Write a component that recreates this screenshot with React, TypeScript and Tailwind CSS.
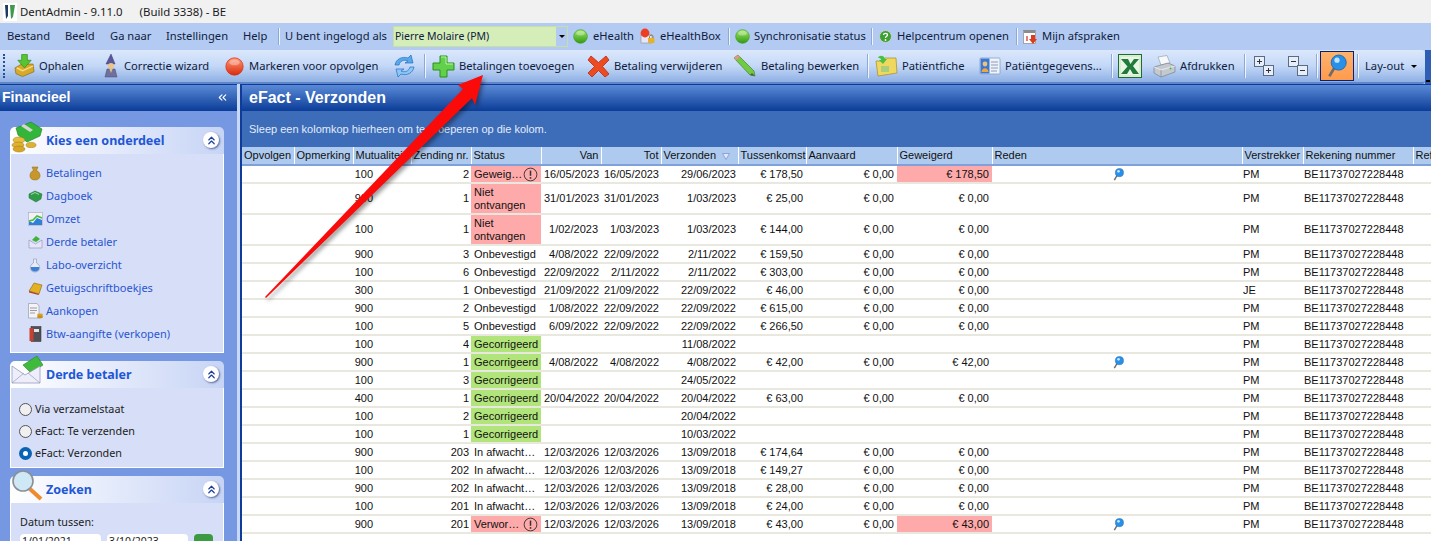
import { ReactNode } from 'react'
import { ChevronsLeft, ChevronsUp } from 'lucide-react'

const IBAN = 'BE11737027228448'

type Row = {
  mut: string
  nr: string
  status: string
  kind?: 'red' | 'green'
  alert?: boolean
  tall?: boolean
  van?: string
  tot?: string
  verz: string
  tus?: string
  aan?: string
  gew?: string
  gewRed?: boolean
  pin?: boolean
  vs?: string
}

const ROWS: Row[] = [
  { mut: '100', nr: '2', status: 'Geweig…', kind: 'red', alert: true, van: '16/05/2023', tot: '16/05/2023', verz: '29/06/2023', tus: '€ 178,50', aan: '€ 0,00', gew: '€ 178,50', gewRed: true, pin: true },
  { mut: '900', nr: '1', status: 'Niet ontvangen', kind: 'red', tall: true, van: '31/01/2023', tot: '31/01/2023', verz: '1/03/2023', tus: '€ 25,00', aan: '€ 0,00', gew: '€ 0,00' },
  { mut: '100', nr: '1', status: 'Niet ontvangen', kind: 'red', tall: true, van: '1/02/2023', tot: '1/03/2023', verz: '1/03/2023', tus: '€ 144,00', aan: '€ 0,00', gew: '€ 0,00' },
  { mut: '900', nr: '3', status: 'Onbevestigd', van: '4/08/2022', tot: '22/09/2022', verz: '2/11/2022', tus: '€ 159,50', aan: '€ 0,00', gew: '€ 0,00' },
  { mut: '100', nr: '6', status: 'Onbevestigd', van: '22/09/2022', tot: '2/11/2022', verz: '2/11/2022', tus: '€ 303,00', aan: '€ 0,00', gew: '€ 0,00' },
  { mut: '300', nr: '1', status: 'Onbevestigd', van: '21/09/2022', tot: '21/09/2022', verz: '22/09/2022', tus: '€ 46,00', aan: '€ 0,00', gew: '€ 0,00', vs: 'JE' },
  { mut: '900', nr: '2', status: 'Onbevestigd', van: '1/08/2022', tot: '22/09/2022', verz: '22/09/2022', tus: '€ 615,00', aan: '€ 0,00', gew: '€ 0,00' },
  { mut: '100', nr: '5', status: 'Onbevestigd', van: '6/09/2022', tot: '22/09/2022', verz: '22/09/2022', tus: '€ 266,50', aan: '€ 0,00', gew: '€ 0,00' },
  { mut: '100', nr: '4', status: 'Gecorrigeerd', kind: 'green', verz: '11/08/2022' },
  { mut: '900', nr: '1', status: 'Gecorrigeerd', kind: 'green', van: '4/08/2022', tot: '4/08/2022', verz: '4/08/2022', tus: '€ 42,00', aan: '€ 0,00', gew: '€ 42,00', pin: true },
  { mut: '100', nr: '3', status: 'Gecorrigeerd', kind: 'green', verz: '24/05/2022' },
  { mut: '400', nr: '1', status: 'Gecorrigeerd', kind: 'green', van: '20/04/2022', tot: '20/04/2022', verz: '20/04/2022', tus: '€ 63,00', aan: '€ 0,00', gew: '€ 0,00' },
  { mut: '100', nr: '2', status: 'Gecorrigeerd', kind: 'green', verz: '20/04/2022' },
  { mut: '100', nr: '1', status: 'Gecorrigeerd', kind: 'green', verz: '10/03/2022' },
  { mut: '900', nr: '203', status: 'In afwacht…', van: '12/03/2026', tot: '12/03/2026', verz: '13/09/2018', tus: '€ 174,64', aan: '€ 0,00', gew: '€ 0,00' },
  { mut: '100', nr: '202', status: 'In afwacht…', van: '12/03/2026', tot: '12/03/2026', verz: '13/09/2018', tus: '€ 149,27', aan: '€ 0,00', gew: '€ 0,00' },
  { mut: '900', nr: '202', status: 'In afwacht…', van: '12/03/2026', tot: '12/03/2026', verz: '13/09/2018', tus: '€ 28,00', aan: '€ 0,00', gew: '€ 0,00' },
  { mut: '100', nr: '201', status: 'In afwacht…', van: '12/03/2026', tot: '12/03/2026', verz: '13/09/2018', tus: '€ 24,00', aan: '€ 0,00', gew: '€ 0,00' },
  { mut: '900', nr: '201', status: 'Verwor…', kind: 'red', alert: true, van: '12/03/2026', tot: '12/03/2026', verz: '13/09/2018', tus: '€ 43,00', aan: '€ 0,00', gew: '€ 43,00', gewRed: true, pin: true },
]

function Dot({ color, size = 16 }: { color: 'green' | 'red'; size?: number }) {
  const light = color === 'green' ? '#a6e86a' : '#ff9a78'
  const dark = color === 'green' ? '#2f9a12' : '#d92a0c'
  const id = `dot-${color}-${size}`
  return (
    <svg width={size} height={size} viewBox="0 0 16 16" className="shrink-0">
      <defs>
        <linearGradient id={id} x1="0" y1="0" x2="0" y2="1">
          <stop offset="0" stopColor={light} />
          <stop offset="1" stopColor={dark} />
        </linearGradient>
      </defs>
      <circle cx="8" cy="8" r="7.3" fill={`url(#${id})`} stroke={dark} strokeWidth="0.6" />
      <ellipse cx="8" cy="4.6" rx="4.4" ry="2.4" fill="#fff" opacity="0.35" />
    </svg>
  )
}

function Pin({ size = 14 }: { size?: number }) {
  return (
    <svg width={size} height={size} viewBox="0 0 14 14" className="shrink-0">
      <path d="M5.5 8 L2.5 13" stroke="#6b6b6b" strokeWidth="1.5" />
      <circle cx="8" cy="5" r="4.4" fill="#2a8fe6" stroke="#1668b8" strokeWidth="0.5" />
      <circle cx="7" cy="3.6" r="1.5" fill="#bfe4ff" />
    </svg>
  )
}

function Alert() {
  return (
    <svg width="15" height="15" viewBox="0 0 16 16" className="shrink-0">
      <circle cx="8" cy="8" r="6.8" fill="none" stroke="#333" strokeWidth="1" />
      <path d="M8 3.8 V9.4" stroke="#333" strokeWidth="1.6" />
      <circle cx="8" cy="11.6" r="1" fill="#333" />
    </svg>
  )
}

const icons: Record<string, ReactNode> = {
  ophalen: (
    <svg width="21" height="26" viewBox="0 0 22 26"><path d="M1 15 L8 11 H20 L21 19 L9 24 L2 21Z" fill="#d8a92a" stroke="#8a6a10" strokeWidth="0.7" /><path d="M3 15 L9 18 L20 13" fill="none" stroke="#f6e28a" strokeWidth="1.4" /><path d="M8 1 H14 V7 H18 L11 15 L4 7 H8Z" fill="#58c432" stroke="#2d8a18" strokeWidth="0.7" /></svg>
  ),
  wizard: (
    <svg width="16" height="26" viewBox="0 0 16 26"><path d="M8 1 L12 11 H3Z" fill="#57579c" stroke="#3b3b78" strokeWidth="0.5" /><circle cx="8" cy="13" r="3" fill="#eec28c" /><path d="M2 24 L4 16 H12 L14 24Z" fill="#70709f" stroke="#48486f" strokeWidth="0.5" /><path d="M6 15 L8 20 L10 15Z" fill="#d9c48a" /></svg>
  ),
  refresh: (
    <svg width="23" height="24" viewBox="0 0 23 24"><path d="M2 11 C3 5 9 2 15 4 L18 1 L20 9 L12 9 L15 7 C11 5 7 7 6 11Z" fill="#5aa8ea" stroke="#1f6fc4" strokeWidth="0.7" /><path d="M21 13 C20 19 14 22 8 20 L5 23 L3 15 L11 15 L8 17 C12 19 16 17 17 13Z" fill="#8cc6f4" stroke="#1f6fc4" strokeWidth="0.7" /></svg>
  ),
  plus: (
    <svg width="23" height="23" viewBox="0 0 23 23"><path d="M8 1 H15 V8 H22 V15 H15 V22 H8 V15 H1 V8 H8Z" fill="#62d04a" stroke="#2b8f1d" strokeWidth="1" /><path d="M9 2 H14 V9 H21" fill="none" stroke="#b9f2a0" strokeWidth="1" /></svg>
  ),
  cross: (
    <svg width="23" height="23" viewBox="0 0 23 23"><path d="M4 1 L11.5 7.5 L19 1 L22 5 L15.5 11.5 L22 19 L18 22 L11.5 15.5 L5 22 L1 18 L7.5 11.5 L1 5Z" fill="#ee4a22" stroke="#b82a0c" strokeWidth="0.8" /></svg>
  ),
  pencil: (
    <svg width="24" height="24" viewBox="0 0 24 24"><path d="M1 4 L5 1 L21 17 L22 22 L17 21Z" fill="#72c944" stroke="#3f8a22" strokeWidth="0.7" /><path d="M1 4 L5 1 L7 3 L3 6Z" fill="#ef8f8f" /><path d="M19 19 L22 22 L17 21Z" fill="#555" /></svg>
  ),
  folder: (
    <svg width="23" height="22" viewBox="0 0 23 22"><path d="M1 6 H8 L10 3 H21 L22 18 L3 21Z" fill="#f0d860" stroke="#a58c26" strokeWidth="0.7" /><path d="M3 3 C4 0 9 0 10 4 L12 4 L8 9 L4 5 L6 5 C6 3 4 3 3 3Z" fill="#4ac040" /><rect x="6" y="11" width="8" height="6" fill="#a9cf7a" /></svg>
  ),
  card: (
    <svg width="22" height="20" viewBox="0 0 22 20"><rect x="1" y="2" width="20" height="16" rx="1" fill="#eef3fb" stroke="#7f95bb" strokeWidth="0.7" /><rect x="1.5" y="2.5" width="9" height="15" fill="#3b78d0" /><circle cx="6" cy="8" r="2.4" fill="#f1c07f" /><path d="M2.5 16 C3 11 9 11 9.5 16Z" fill="#f4a43a" /><path d="M12 6 H19 M12 9 H19 M12 12 H19 M12 15 H18" stroke="#8e9bb3" strokeWidth="1" /></svg>
  ),
  excel: (
    <svg width="24" height="24" viewBox="0 0 24 24"><rect x="0.5" y="0.5" width="23" height="23" fill="#d8ecd0" stroke="#1f6b35" /><rect x="3" y="3" width="18" height="18" fill="#eaf4e5" /><path d="M3 5 H10 L12.5 10 L16 5 H21 L15 12 L21 20 H15 L12 15 L9 20 H3 L9.5 12.5Z" fill="#1f7a3c" /></svg>
  ),
  printer: (
    <svg width="23" height="23" viewBox="0 0 23 23"><path d="M5 2 L14 0.5 L17 8 L8 10Z" fill="#f6f8fb" stroke="#8c96a3" strokeWidth="0.6" /><path d="M1 12 L15 8 L22 11 V17 L8 22 L1 18Z" fill="#c4c9cf" stroke="#6f7680" strokeWidth="0.6" /><path d="M1 12 L8 15 L22 11" fill="none" stroke="#f0f2f4" strokeWidth="0.8" /><path d="M8 15 V22" stroke="#7a808a" strokeWidth="0.6" /><circle cx="17.5" cy="13.5" r="0.9" fill="#41b83a" /></svg>
  ),
  expand: (
    <svg width="20" height="20" viewBox="0 0 20 20"><rect x="0.5" y="0.5" width="10" height="10" fill="#e7eefb" stroke="#5d6b80" /><path d="M3 5.5 H8 M5.5 3 V8" stroke="#333" /><rect x="9.5" y="9.5" width="10" height="10" fill="#e7eefb" stroke="#5d6b80" /><path d="M12 14.5 H17 M14.5 12 V17" stroke="#333" /></svg>
  ),
  collapse: (
    <svg width="20" height="20" viewBox="0 0 20 20"><rect x="0.5" y="0.5" width="10" height="10" fill="#e7eefb" stroke="#5d6b80" /><path d="M3 5.5 H8" stroke="#333" /><rect x="9.5" y="9.5" width="10" height="10" fill="#e7eefb" stroke="#5d6b80" /><path d="M12 14.5 H17" stroke="#333" /></svg>
  ),
}

function Sep({ className = 'h-[24px]' }: { className?: string }) {
  return <div className={`w-[2px] shrink-0 border-l border-[#8fa9d6] bg-white/80 ${className}`} />
}

function MenuText({ className, children }: { className: string; children: ReactNode }) {
  return <span className={`shrink-0 whitespace-nowrap ${className}`}>{children}</span>
}

function MenuBar() {
  return (
    <div className="flex h-[27px] items-center bg-[#b3cbf2] text-[11.2px] text-[#10203c]">
      <MenuText className="w-[65px] pl-[7px]">Bestand</MenuText>
      <MenuText className="w-[45px]">Beeld</MenuText>
      <MenuText className="w-[56px]">Ga naar</MenuText>
      <MenuText className="w-[77px]">Instellingen</MenuText>
      <MenuText className="w-[35px]">Help</MenuText>
      <Sep className="h-[17px]" />
      <MenuText className="w-[113px] pl-[5px]">U bent ingelogd als</MenuText>
      <div className="flex h-[21px] w-[175px] shrink-0 items-center border border-[#c5e0a5] bg-[#d5edb9] pl-px">
        <span className="flex-1 text-[10.5px]">Pierre Molaire (PM)</span>
        <span className="flex h-full w-[11px] items-center justify-center bg-[#b3cbf2]">
          <span className="h-0 w-0 border-x-[3px] border-t-[3px] border-x-transparent border-t-black" />
        </span>
      </div>
      <div className="ml-[5px] flex w-[67px] shrink-0 items-center gap-[5px]">
        <Dot color="green" size={15} />
        <span>eHealth</span>
      </div>
      <div className="flex w-[88px] shrink-0 items-center gap-[5px]">
        <svg width="15" height="16" viewBox="0 0 15 16" className="shrink-0">
          <rect x="1" y="7" width="11" height="8" fill="#e6e6f4" stroke="#8a8aa8" strokeWidth="0.6" />
          <circle cx="5" cy="5" r="4.4" fill="#ee3d22" />
          <rect x="8" y="10" width="6.5" height="5" fill="#e5b22a" />
          <path d="M9.5 10 V8.5 A1.8 1.8 0 0 1 13 8.5 V10" fill="none" stroke="#8b7a3a" />
        </svg>
        <span>eHealthBox</span>
      </div>
      <Sep className="h-[17px]" />
      <div className="ml-[5px] flex w-[136px] shrink-0 items-center gap-[4px]">
        <Dot color="green" size={15} />
        <span className="whitespace-nowrap">Synchronisatie status</span>
      </div>
      <Sep className="h-[17px]" />
      <div className="ml-[6px] flex w-[137px] shrink-0 items-center gap-[5px]">
        <svg width="13" height="13" viewBox="0 0 13 13" className="shrink-0">
          <circle cx="6.5" cy="6.5" r="6" fill="#3da12f" stroke="#c9cfd6" strokeWidth="1" />
          <path d="M4.5 5 C4.5 2.8 8.5 2.8 8.5 5 C8.5 6.4 6.5 6.2 6.5 8" fill="none" stroke="#fff" strokeWidth="1.3" />
          <circle cx="6.5" cy="10" r="0.9" fill="#fff" />
        </svg>
        <span className="whitespace-nowrap">Helpcentrum openen</span>
      </div>
      <Sep className="h-[17px]" />
      <div className="ml-[5px] flex shrink-0 items-center gap-[5px]">
        <svg width="14" height="15" viewBox="0 0 14 15" className="shrink-0">
          <rect x="0.5" y="1.5" width="12" height="13" fill="#fff" stroke="#8a8a8a" strokeWidth="0.7" />
          <rect x="1" y="1" width="11" height="3" fill="#8c8c8c" />
          <path d="M8 6 H12 V10 H14 L10 15 L6 10 H8Z" fill="#e03a1e" />
          <path d="M4 7 V12" stroke="#d33" strokeWidth="1.3" />
        </svg>
        <span>Mijn afspraken</span>
      </div>
    </div>
  )
}

function Tool({ icon, label, className }: { icon: ReactNode; label?: string; className: string }) {
  return (
    <div className={`flex shrink-0 items-center gap-[4px] whitespace-nowrap ${className}`}>
      <span className="flex shrink-0 items-center justify-center">{icon}</span>
      {label && <span>{label}</span>}
    </div>
  )
}

function Toolbar() {
  return (
    <div className="flex h-[34px] bg-[#b3cbf2] text-[11.2px] text-[#10203c]">
      <div className="flex h-full w-[1425px] items-center rounded-r-[3px] border-b-2 border-[#5f86c9] bg-gradient-to-b from-[#dbe8fc] via-[#c3d8f7] to-[#8fb0e4]">
        <div className="ml-[3px] mr-[9px] h-[24px] w-[2px] shrink-0 border-l-2 border-dotted border-[#2a4f92]" />
        <Tool className="w-[88px]" icon={icons.ophalen} label="Ophalen" />
        <Tool className="w-[123px] gap-[5px] pl-[1px]" icon={icons.wizard} label="Correctie wizard" />
        <Tool className="w-[168px] gap-[5px]" icon={<Dot color="red" size={19} />} label="Markeren voor opvolgen" />
        <Tool className="w-[31px]" icon={icons.refresh} />
        <Sep />
        <Tool className="ml-[6px] w-[155px]" icon={icons.plus} label="Betalingen toevoegen" />
        <Tool className="w-[146px]" icon={icons.cross} label="Betaling verwijderen" />
        <Tool className="w-[134px] gap-[3px]" icon={icons.pencil} label="Betaling bewerken" />
        <Sep />
        <Tool className="ml-[6px] w-[104px]" icon={icons.folder} label="Patiëntfiche" />
        <Tool className="w-[132px]" icon={icons.card} label="Patiëntgegevens..." />
        <Sep />
        <Tool className="ml-[5px] w-[35px]" icon={icons.excel} />
        <Tool className="w-[91px]" icon={icons.printer} label="Afdrukken" />
        <Sep />
        <Tool className="ml-[8px] w-[34px]" icon={icons.expand} />
        <Tool className="w-[28px]" icon={icons.collapse} />
        <Sep />
        <div className="ml-[2px] flex h-[30px] w-[34px] shrink-0 items-center justify-center border border-[#0a1f78] bg-gradient-to-b from-[#ffb36b] to-[#ff9a4d]">
          <Pin size={24} />
        </div>
        <Sep className="ml-[3px] h-[24px]" />
        <span className="ml-[6px]">Lay-out</span>
        <span className="ml-[7px] h-0 w-0 border-x-[3px] border-t-[3px] border-x-transparent border-t-black" />
      </div>
      <div className="flex flex-1 items-end justify-center bg-[#2f5fb4] pb-[2px]">
        <span className="h-[2px] w-[4px] bg-black" />
      </div>
    </div>
  )
}

function PanelHead({ icon, title }: { icon: ReactNode; title: string }) {
  return (
    <div className="relative flex h-[27px] items-center rounded-t-[5px] bg-gradient-to-r from-white to-[#c7d4f5] pl-[36px] pt-px text-[12.5px] font-bold text-[#2156d6]">
      <span className="absolute -top-[6px] left-[1px]">{icon}</span>
      <span>{title}</span>
      <span className="absolute right-[5px] top-[5px] flex h-[16px] w-[16px] items-center justify-center rounded-full bg-white shadow-[1px_1px_2px_rgba(40,60,120,0.7)]">
        <ChevronsUp size={13} strokeWidth={2.2} className="text-[#1c3f9c]" />
      </span>
    </div>
  )
}

const NAV: { label: string; icon: ReactNode }[] = [
  { label: 'Betalingen', icon: <svg width="14" height="15" viewBox="0 0 14 15"><path d="M4 1 H10 L8.5 4.5 C13 6 14 14 7 14 C0 14 1 6 5.5 4.5Z" fill="#c8962a" stroke="#8d6a16" strokeWidth="0.5" /></svg> },
  { label: 'Dagboek', icon: <svg width="15" height="13" viewBox="0 0 15 13"><path d="M1 4 L7 1 L14 4 L13 9 L8 12 L1 8Z" fill="#2f9a48" stroke="#1e6d30" strokeWidth="0.5" /><path d="M3 4.5 L7 2.5 L11 4.5" stroke="#bdf0c4" fill="none" strokeWidth="0.8" /></svg> },
  { label: 'Omzet', icon: <svg width="15" height="14" viewBox="0 0 15 14"><rect x="0.5" y="0.5" width="14" height="13" fill="#f1f1f6" stroke="#9a9ab0" strokeWidth="0.5" /><path d="M1 13 V9 L5 11 L9 6 L14 8 V13Z" fill="#2f80d8" /><path d="M1 9 L5 8 L9 4 L14 6" stroke="#3fbf3a" strokeWidth="1.6" fill="none" /></svg> },
  { label: 'Derde betaler', icon: <svg width="15" height="14" viewBox="0 0 15 14"><path d="M1 5 L7.5 9 L14 5 V13 H1Z" fill="#e6e6fa" stroke="#8d8db4" strokeWidth="0.6" /><path d="M4 5 L8 1 L12 4 L8 7Z" fill="#3fb23a" /></svg> },
  { label: 'Labo-overzicht', icon: <svg width="12" height="15" viewBox="0 0 12 15"><path d="M4.5 1 H7.5 V5 C12 7 12 14 6 14 C0 14 0 7 4.5 5Z" fill="#e7ecf6" stroke="#8b95ab" strokeWidth="0.6" /><path d="M1.8 9 H10.2 C10.6 12 8.5 13.5 6 13.5 C3.5 13.5 1.4 12 1.8 9Z" fill="#3c7fd6" /></svg> },
  { label: 'Getuigschriftboekjes', icon: <svg width="15" height="13" viewBox="0 0 15 13"><path d="M1 9 L6 1 L14 3 L11 12Z" fill="#e2b021" stroke="#8a6414" strokeWidth="0.6" /><path d="M1 9 L11 12 L10.5 13 L1 10.5Z" fill="#b3402b" /></svg> },
  { label: 'Aankopen', icon: <svg width="15" height="16" viewBox="0 0 15 16"><path d="M0.5 0.5 H9 L11 3 V15 H0.5Z" fill="#f4f4f8" stroke="#8e8e9e" strokeWidth="0.6" /><path d="M2 5 H9 M2 7.5 H9 M2 10 H7" stroke="#9a9aa8" /><ellipse cx="12" cy="12" rx="3" ry="1.4" fill="#d6a328" /><ellipse cx="12" cy="14" rx="3" ry="1.4" fill="#c48f1c" /></svg> },
  { label: 'Btw-aangifte (verkopen)', icon: <svg width="13" height="16" viewBox="0 0 13 16"><rect x="2" y="0.5" width="10" height="15" fill="#4f4f55" stroke="#2c2c30" strokeWidth="0.5" /><rect x="0.5" y="2" width="4" height="13" fill="#c8402e" /><rect x="5" y="3" width="5" height="3" fill="#e4e4e8" /></svg> },
]

function Sidebar() {
  return (
    <div className="flex h-full w-[237px] shrink-0 flex-col overflow-hidden bg-[#7698e2]">
      <div className="flex h-[27px] shrink-0 items-center justify-between border-t border-[#0f3c9a] bg-gradient-to-b from-[#5a8ad6] to-[#0a3c98] pb-[2px] pl-[2px] pr-[8px] font-['Liberation_Sans',sans-serif] text-[14px] font-bold text-white">
        <span>Financieel</span>
        <ChevronsLeft size={13} strokeWidth={2} />
      </div>
      <div className="box-content flex w-[214px] flex-col gap-[8px] pl-[10px] pt-[16px]">
        <section>
          <PanelHead
            title="Kies een onderdeel"
            icon={
              <svg width="32" height="32" viewBox="0 0 32 32">
                <path d="M5 7 L20 1 L31 8 L29 15 L16 21 L7 14Z" fill="#33b53a" stroke="#1c7d24" strokeWidth="0.6" />
                <path d="M13 3 L22 9 L19 11 L10 5Z" fill="#d6d6d6" />
                <ellipse cx="8" cy="19" rx="6" ry="3" fill="#e7bd3e" stroke="#9b7618" strokeWidth="0.5" />
                <ellipse cx="7" cy="24" rx="6" ry="3" fill="#dfb12f" stroke="#9b7618" strokeWidth="0.5" />
                <ellipse cx="8" cy="28" rx="6" ry="3" fill="#d8a623" stroke="#9b7618" strokeWidth="0.5" />
                <ellipse cx="20" cy="24" rx="5" ry="2.6" fill="#dfb12f" stroke="#9b7618" strokeWidth="0.5" />
              </svg>
            }
          />
          <ul className="flex h-[199px] flex-col gap-[3px] border border-t-0 border-white bg-[#d6dff7] pl-[13px] pt-[9px] text-[11px] text-[#2a55d2]">
            {NAV.map(n => (
              <li key={n.label} className="flex h-[20px] items-center whitespace-nowrap">
                <span className="flex w-[22px] justify-center">{n.icon}</span>
                <span>{n.label}</span>
              </li>
            ))}
          </ul>
        </section>
        <section>
          <PanelHead
            title="Derde betaler"
            icon={
              <svg width="32" height="32" viewBox="0 0 32 32">
                <path d="M12 10 L26 1 L32 10 L20 18Z" fill="#3fba3a" stroke="#1f8a22" strokeWidth="0.6" />
                <path d="M1 11 L14 20 L29 11 V28 H1Z" fill="#eeeefb" stroke="#8d8db4" strokeWidth="0.7" />
                <path d="M1 28 L13 18 M29 28 L17 18" stroke="#9a9ac0" strokeWidth="0.7" />
              </svg>
            }
          />
          <div className="flex h-[80px] flex-col gap-[2px] border border-t-0 border-white bg-[#d6dff7] pl-[8px] pt-[11px] text-[10.8px] text-[#1c1c1c]">
            {['Via verzamelstaat', 'eFact: Te verzenden', 'eFact: Verzonden'].map((l, i) => (
              <label key={l} className="flex h-[20px] items-center gap-[3px] whitespace-nowrap">
                {i === 2 ? (
                  <span className="flex h-[13px] w-[13px] items-center justify-center rounded-full bg-[#0a63b4]">
                    <span className="h-[5px] w-[5px] rounded-full bg-white" />
                  </span>
                ) : (
                  <span className="h-[13px] w-[13px] rounded-full border border-[#555] bg-[#f0f0f0]" />
                )}
                <span>{l}</span>
              </label>
            ))}
          </div>
        </section>
        <section>
          <PanelHead
            title="Zoeken"
            icon={
              <svg width="32" height="32" viewBox="0 0 32 32">
                <path d="M19 19 L30 29" stroke="#ef8b2c" strokeWidth="4" />
                <circle cx="12" cy="11" r="10" fill="#cfe8f6" stroke="#8a8f96" strokeWidth="1.6" />
              </svg>
            }
          />
          <div className="h-[60px] border-x border-white bg-[#d6dff7] pl-[9px] pt-[11px] text-[10.8px] text-[#1c1c1c]">
            <div className="mb-[4px]">Datum tussen:</div>
            <div className="flex items-start gap-[6px] text-[10.5px]">
              <span className="h-[20px] w-[81px] rounded-sm bg-white pl-[2px]">1/01/2021</span>
              <span className="h-[20px] w-[81px] rounded-sm bg-white pl-[2px]">3/10/2023</span>
              <span className="h-[20px] w-[19px] rounded-sm bg-[#3c9a42]" />
            </div>
          </div>
        </section>
      </div>
    </div>
  )
}

const HEADERS: { label: string; right?: boolean; col: string }[] = [
  { label: 'Opvolgen', col: 'w-[52px]' },
  { label: 'Opmerking', col: 'w-[59px]' },
  { label: 'Mutualiteit', col: 'w-[58px]' },
  { label: 'Zending nr.', col: 'w-[60px]' },
  { label: 'Status', col: 'w-[70px]' },
  { label: 'Van', right: true, col: 'w-[60px]' },
  { label: 'Tot', right: true, col: 'w-[60px]' },
  { label: 'Verzonden', col: 'w-[77px]' },
  { label: 'Tussenkomst', col: 'w-[68px]' },
  { label: 'Aanvaard', col: 'w-[91px]' },
  { label: 'Geweigerd', col: 'w-[95px]' },
  { label: 'Reden', col: 'w-[250px]' },
  { label: 'Verstrekker', col: 'w-[61px]' },
  { label: 'Rekening nummer', col: 'w-[110px]' },
  { label: 'Referentie', col: 'w-[60px]' },
]

function Grid() {
  const td = 'px-[3px] whitespace-nowrap overflow-hidden'
  return (
    <table className="w-[1231px] max-w-none table-fixed border-collapse font-['Liberation_Sans',sans-serif] text-[11px] leading-[13px] text-[#111]">
      <colgroup>
        {HEADERS.map(h => (
          <col key={h.label} className={h.col} />
        ))}
      </colgroup>
      <thead>
        <tr className="h-[18px] border-b-2 border-[#7fa0d8] bg-[#aecbef]">
          {HEADERS.map(h => (
            <th
              key={h.label}
              className={`overflow-hidden whitespace-nowrap border-l border-white/80 px-[2px] font-normal first:border-l-0 ${h.right ? 'text-right' : 'text-left'}`}
            >
              {h.label}
              {h.label === 'Verzonden' && (
                <svg width="8" height="7" viewBox="0 0 8 7" className="ml-[6px] inline-block">
                  <path d="M0.5 0.5 H7.5 L4 6.5Z" fill="#dfe8f8" stroke="#7f95d0" strokeWidth="0.8" />
                </svg>
              )}
            </th>
          ))}
        </tr>
      </thead>
      <tbody>
        {ROWS.map((r, i) => (
          <tr key={i} className={`border-b-2 border-[#e8e8df] ${r.tall ? 'h-[31px]' : 'h-[18px]'}`}>
            <td />
            <td />
            <td className="overflow-hidden whitespace-nowrap pr-[38px] text-right">{r.mut}</td>
            <td className="overflow-hidden whitespace-nowrap pr-[2px] text-right">{r.nr}</td>
            <td className={`px-[3px] ${r.kind === 'red' ? 'bg-[#ffaaaa]' : r.kind === 'green' ? 'bg-[#b1e47a]' : ''}`}>
              <div className="flex items-center justify-between">
                <span className={r.tall ? 'leading-[13px]' : 'whitespace-nowrap'}>{r.status}</span>
                {r.alert && <Alert />}
              </div>
            </td>
            <td className={`${td} text-right`}>{r.van}</td>
            <td className="overflow-hidden whitespace-nowrap pr-[2px] text-right">{r.tot}</td>
            <td className="overflow-hidden whitespace-nowrap pr-[2px] text-right">{r.verz}</td>
            <td className={`${td} text-right`}>{r.tus}</td>
            <td className={`${td} text-right`}>{r.aan}</td>
            <td className={`${td} text-right ${r.gewRed ? 'bg-[#ffaaaa]' : ''}`}>{r.gew}</td>
            <td className="pl-[120px]">{r.pin && <Pin size={13} />}</td>
            <td className="overflow-hidden whitespace-nowrap pl-[1px]">{r.vs ?? 'PM'}</td>
            <td className="overflow-hidden whitespace-nowrap pl-[1px]">{IBAN}</td>
            <td />
          </tr>
        ))}
      </tbody>
    </table>
  )
}

export default function App() {
  return (
    <div className="relative h-[541px] w-[1431px] overflow-hidden bg-[#c9d9f5] font-['Noto_Sans',sans-serif]">
      <div className="flex h-[23px] items-center bg-[#f1f1f1] text-[11.4px] text-[#1a1a1a]">
        <svg width="14" height="18" viewBox="0 0 14 18" className="ml-[3px] mr-[3px]">
          <rect width="14" height="18" fill="#fff" />
          <path d="M2 2 L5 2 L5 13 L3 16Z" fill="#1d3b5e" />
          <path d="M7 2 H12 L10 14 L8 16Z" fill="#3f9a4f" />
        </svg>
        <span>DentAdmin - 9.11.0</span>
        <span className="ml-[17px]">(Build 3338) - BE</span>
      </div>
      <MenuBar />
      <Toolbar />
      <div className="flex h-[457px] gap-[3px]">
        <Sidebar />
        <main className="flex min-w-0 flex-1 flex-col overflow-hidden border-l-2 border-[#0f3c9a] bg-white">
          <div className="flex h-[27px] shrink-0 items-center border-t border-[#0f3c9a] bg-gradient-to-b from-[#5a8ad6] to-[#0a3c98] pl-[7px] font-['Liberation_Sans',sans-serif] text-[16px] font-bold text-white">
            eFact - Verzonden
          </div>
          <div className="flex h-[36px] shrink-0 items-center bg-[#3d6cb9] pl-[7px] font-['Liberation_Sans',sans-serif] text-[11px] text-[#e3ecfa]">
            Sleep een kolomkop hierheen om te groeperen op die kolom.
          </div>
          <Grid />
        </main>
      </div>
      <svg width="1431" height="541" viewBox="0 0 1431 541" className="pointer-events-none absolute left-0 top-0 drop-shadow-[2px_3px_2px_rgba(0,0,0,0.4)]">
        <polygon points="265,297 463,89 458,85 483,75 475,105 472,98 266,298" fill="#fb0a0a" />
      </svg>
    </div>
  )
}
